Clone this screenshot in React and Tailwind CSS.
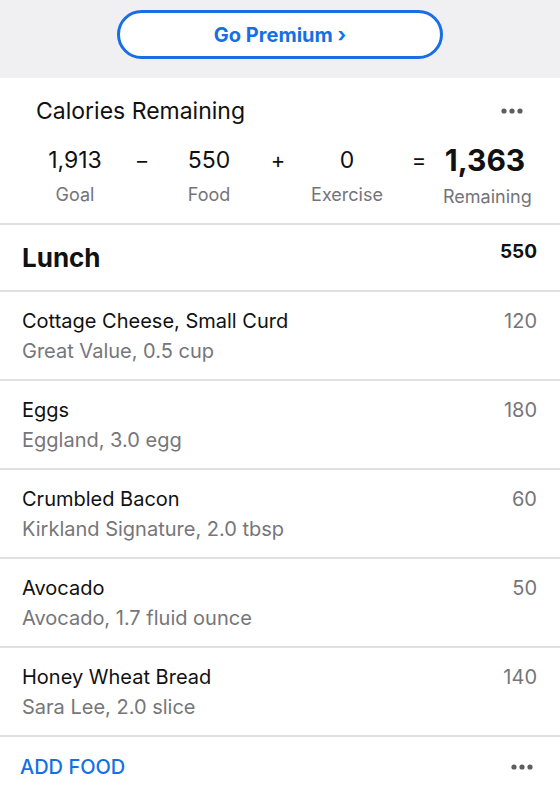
import React from 'react';

const Dots = () => (
  <svg width="22" height="6" viewBox="0 0 22 6" fill="#5e5e62">
    <circle cx="3" cy="3" r="2.6" />
    <circle cx="11" cy="3" r="2.6" />
    <circle cx="19" cy="3" r="2.6" />
  </svg>
);

const foods = [
  { name: 'Cottage Cheese, Small Curd', detail: 'Great Value, 0.5 cup', cal: 120 },
  { name: 'Eggs', detail: 'Eggland, 3.0 egg', cal: 180 },
  { name: 'Crumbled Bacon', detail: 'Kirkland Signature, 2.0 tbsp', cal: 60 },
  { name: 'Avocado', detail: 'Avocado, 1.7 fluid ounce', cal: 50 },
  { name: 'Honey Wheat Bread', detail: 'Sara Lee, 2.0 slice', cal: 140 },
];

export default function App() {
  return (
    <div className="w-[560px] h-[800px] overflow-hidden bg-white text-[#111] font-['Inter',sans-serif]">
      {/* premium banner */}
      <div className="h-[78px] bg-[#f0f0f2] flex justify-center pt-[10px]">
        <button className="w-[326px] h-[49px] rounded-full border-[3px] border-[#1670e4] bg-white text-[#1670e4] text-[20px] font-bold flex items-center justify-center">
          Go Premium ›
        </button>
      </div>

      {/* calories remaining */}
      <div className="pt-[17px] pb-[16px] border-b-2 border-[#e0e0e2]">
        <div className="flex items-center justify-between pl-[36px] pr-[37px]">
          <span className="text-[23px] leading-[32px]">Calories Remaining</span>
          <Dots />
        </div>
        <div className="flex pl-[27px] mt-[16px] items-center">
          <div className="w-[96px] text-center text-[23px] leading-[34px]">1,913</div>
          <div className="w-[38px] text-center text-[22px] leading-[34px]">−</div>
          <div className="w-[96px] text-center text-[23px] leading-[34px]">550</div>
          <div className="w-[42px] text-center text-[22px] leading-[34px]">+</div>
          <div className="w-[96px] text-center text-[23px] leading-[34px]">0</div>
          <div className="w-[48px] text-center text-[22px] leading-[34px]">=</div>
          <div className="w-[84px] text-center text-[30px] leading-[34px] font-bold">1,363</div>
        </div>
        <div className="flex pl-[27px] mt-[6px] text-[18px] leading-[24px] text-[#747478]">
          <div className="w-[96px] text-center">Goal</div>
          <div className="w-[38px]" />
          <div className="w-[96px] text-center">Food</div>
          <div className="w-[42px]" />
          <div className="w-[96px] text-center">Exercise</div>
          <div className="w-[48px]" />
          <div className="w-[84px] text-center mt-[2px] -mb-[2px]">Remaining</div>
        </div>
      </div>

      {/* meal header */}
      <div className="h-[67px] flex items-center justify-between pl-[22px] pr-[23px] border-b-2 border-[#e0e0e2]">
        <span className="text-[26px] font-bold">Lunch</span>
        <span className="text-[19px] font-bold mb-[10px]">550</span>
      </div>

      {foods.map((f) => (
        <div key={f.name} className="pt-[16px] pb-[15px] pl-[22px] pr-[23px] border-b-2 border-[#e0e0e2] flex justify-between">
          <div className="flex flex-col gap-[4px]">
            <span className="text-[20px] leading-[26px]">{f.name}</span>
            <span className="text-[20px] leading-[26px] text-[#76767a]">{f.detail}</span>
          </div>
          <span className="text-[20px] leading-[26px] text-[#76767a]">{f.cal}</span>
        </div>
      ))}

      <div className="h-[60px] flex items-center justify-between pl-[20px] pr-[27px]">
        <span className="text-[20px] font-medium text-[#1670e4]">ADD FOOD</span>
        <Dots />
      </div>
    </div>
  );
}
